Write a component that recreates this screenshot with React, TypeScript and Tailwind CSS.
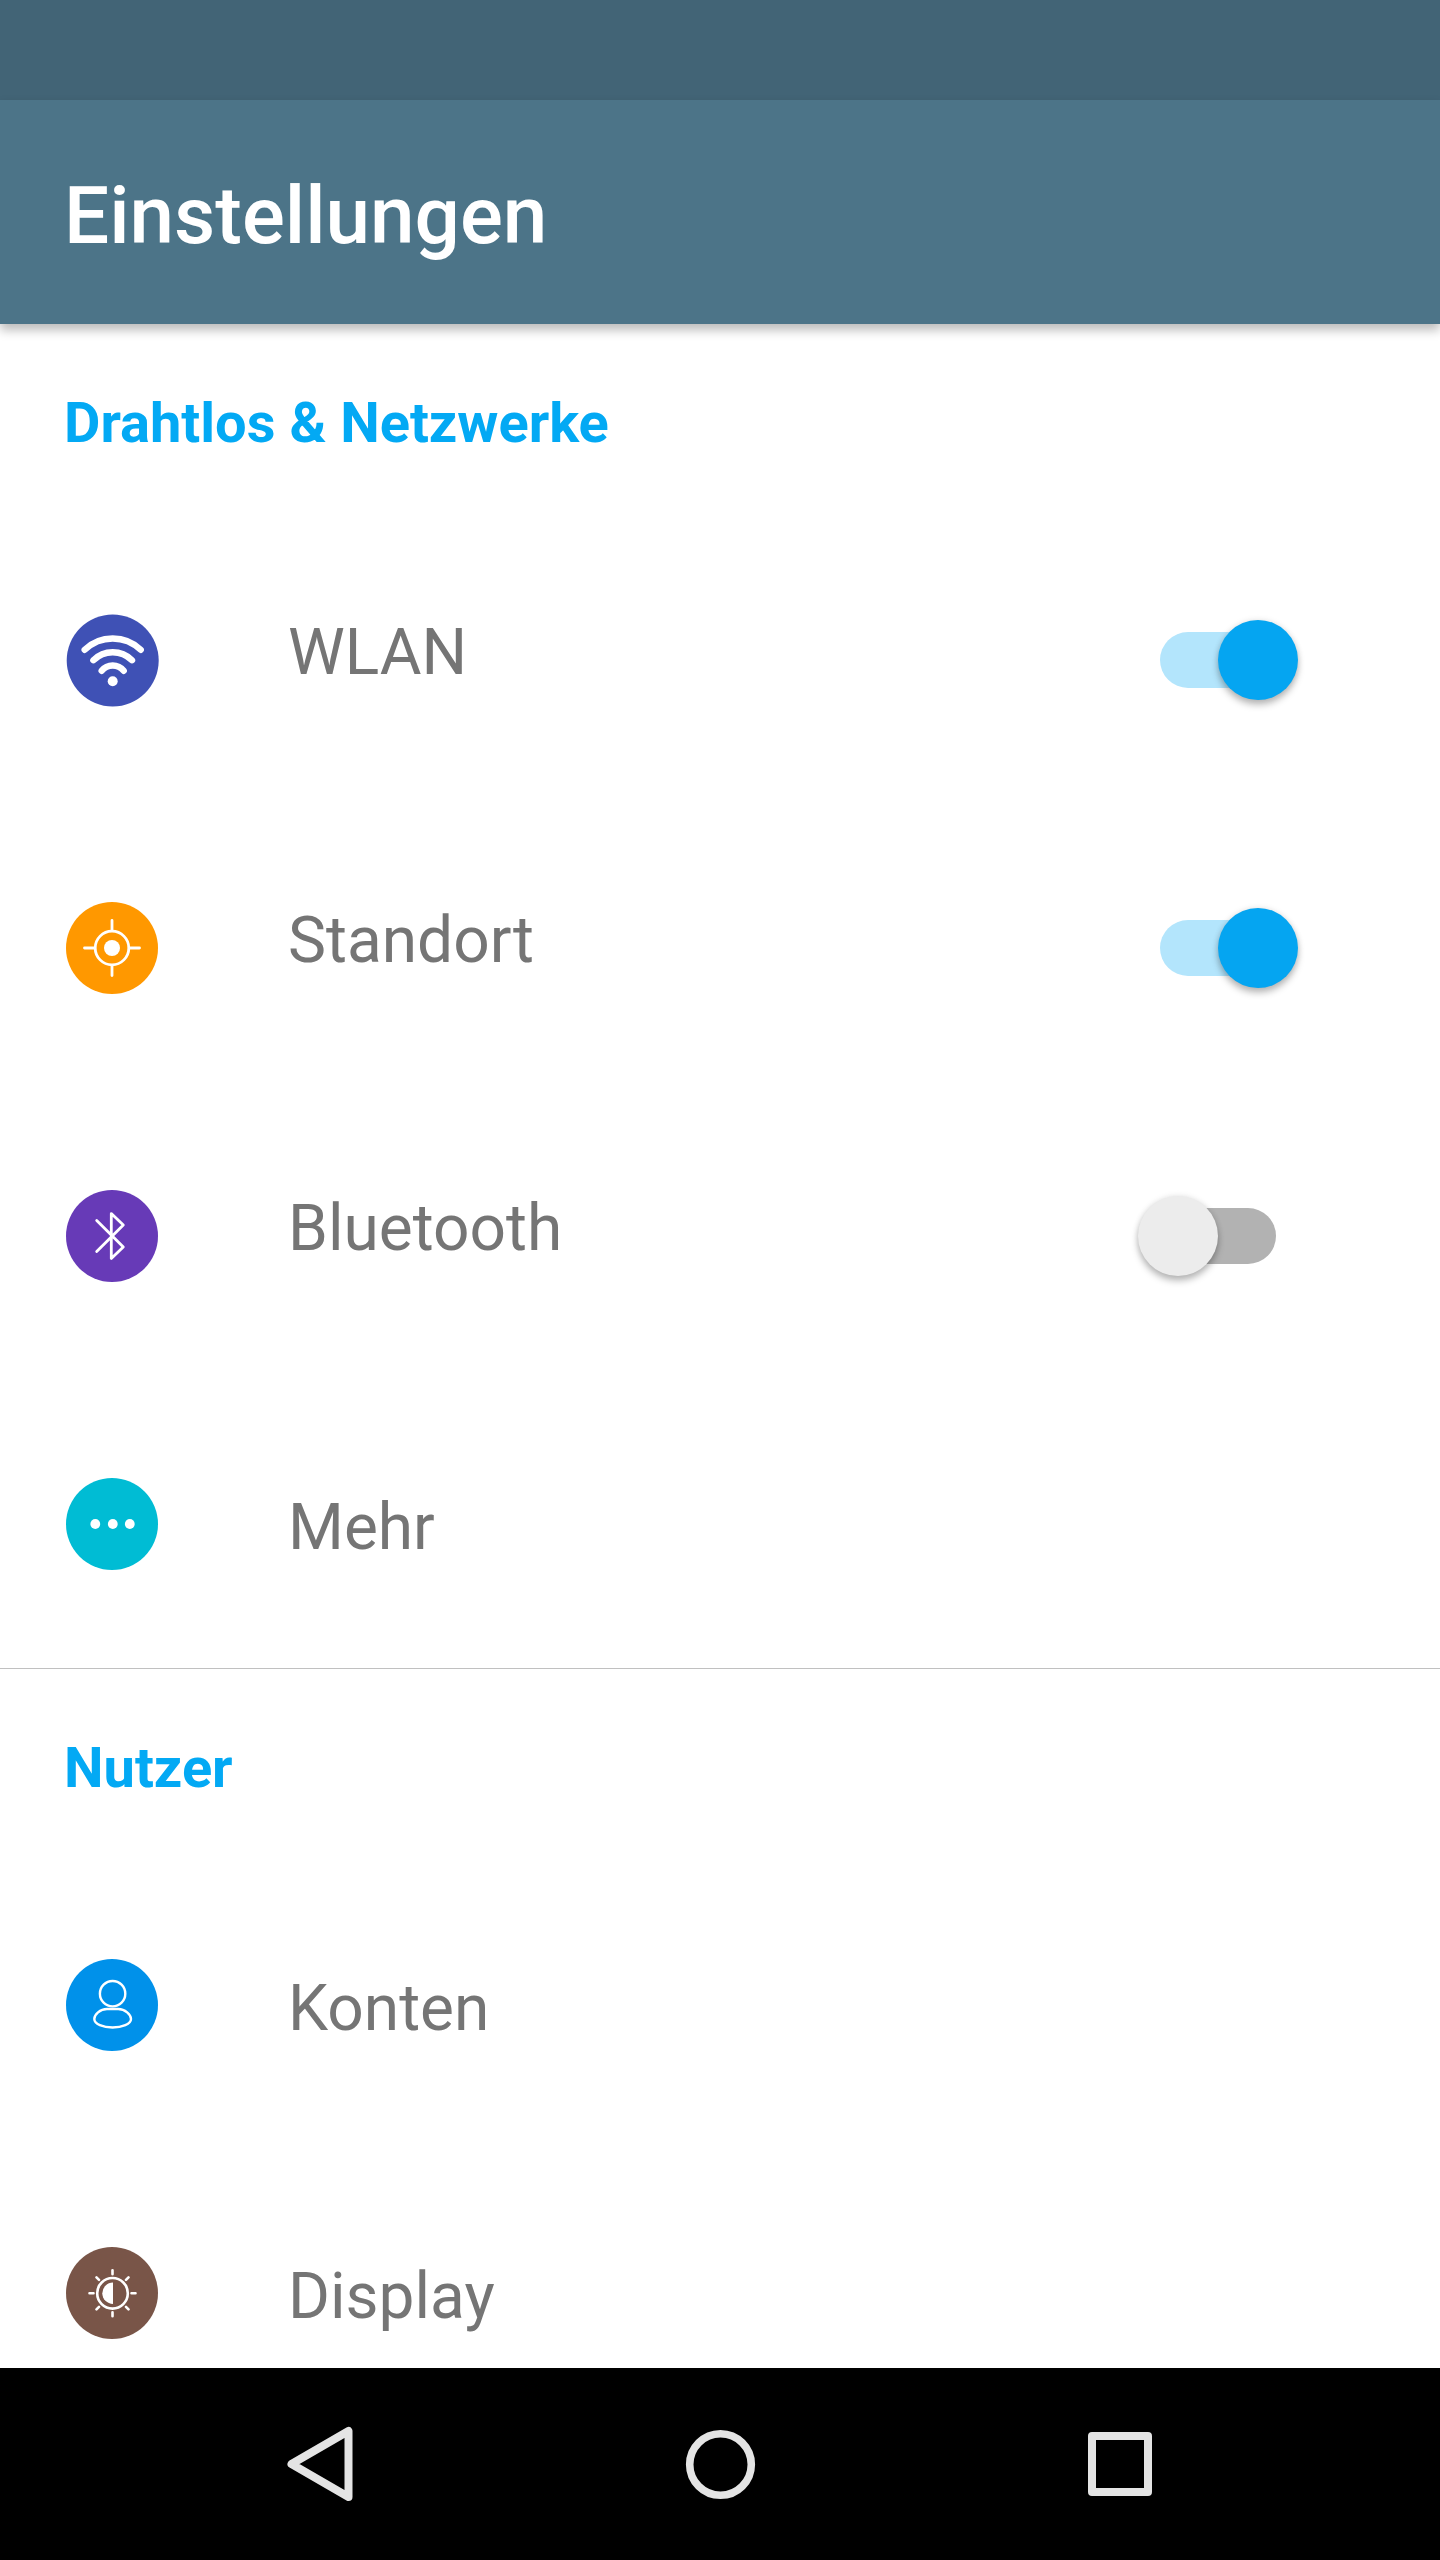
import { useState, type ReactNode } from 'react'
import clsx from 'clsx'

type SettingsItem = {
  label: string
  icon: ReactNode
  toggle?: boolean
}

type SettingsSection = {
  title: string
  items: SettingsItem[]
}

// Icons are drawn around the origin of a 96x96 box
const WifiIcon = (
  <g transform="translate(0.7 0.5)" fill="none" stroke="white" strokeWidth="6.4" strokeLinecap="round">
    <circle r="46" fill="#3f51b5" stroke="none" />
    <path d="M-28 -10.7A40.3 40.3 0 0 1 28 -10.7" />
    <path d="M-19.3 -0.3A27.3 27.3 0 0 1 19.3 -0.3" />
    <path d="M-11 10.3A14 14 0 0 1 11 10.3" />
    <circle cy="20.7" r="5" fill="white" stroke="none" />
  </g>
)

const LocationIcon = (
  <g fill="none" stroke="white" strokeWidth="2.8" strokeLinecap="round">
    <circle r="46" fill="#ff9800" stroke="none" />
    <circle r="16.8" />
    <circle r="8" fill="white" stroke="none" />
    <path d="M0 -27.5V-18M0 18V27.5M-27.5 0H-18M18 0H27.5" />
  </g>
)

const BluetoothIcon = (
  <g fill="none" stroke="white" strokeWidth="2.8" strokeLinecap="round" strokeLinejoin="round">
    <circle r="46" fill="#673ab7" stroke="none" />
    <path d="M-15.3 -15.5L11.3 11L-0.7 22.4V-22.4L11.3 -11L-15.3 15.5" />
  </g>
)

const MoreIcon = (
  <g fill="white">
    <circle r="46" fill="#00bcd4" />
    <circle cx="-16.7" r="4.9" />
    <circle cx="0.8" r="4.9" />
    <circle cx="17.8" r="4.9" />
  </g>
)

const AccountIcon = (
  <g fill="none" stroke="white" strokeWidth="2.4">
    <circle r="46" fill="#0091ea" stroke="none" />
    <circle cx="0.6" cy="-11.3" r="12.7" />
    <path d="M-5 4H6.3C13 4 19 9.5 19 14C19 19 10 22.5 0.6 22.5C-9 22.5 -17.7 19 -17.7 14C-17.7 9.5 -12 4 -5 4Z" />
  </g>
)

const DisplayIcon = (
  <g fill="none" stroke="white" strokeWidth="2.6" strokeLinecap="round">
    <circle r="46" fill="#795548" stroke="none" />
    <g transform="translate(0.5 0.3)">
      <circle r="15.3" />
      <path d="M0.5 -10.7A10.7 10.7 0 0 0 0.5 10.7Z" fill="white" stroke="none" />
      <path d="M0 -23V-19M0 19V23M-23 0H-19M19 0H23" />
      <path d="M-16 -16L-13.5 -13.5M13.5 13.5L16 16M-16 16L-13.5 13.5M13.5 -13.5L16 -16" />
    </g>
  </g>
)

const sections: SettingsSection[] = [
  {
    title: 'Drahtlos & Netzwerke',
    items: [
      { label: 'WLAN', icon: WifiIcon, toggle: true },
      { label: 'Standort', icon: LocationIcon, toggle: true },
      { label: 'Bluetooth', icon: BluetoothIcon, toggle: false },
      { label: 'Mehr', icon: MoreIcon },
    ],
  },
  {
    title: 'Nutzer',
    items: [
      { label: 'Konten', icon: AccountIcon },
      { label: 'Display', icon: DisplayIcon },
    ],
  },
]

function Toggle({ label, initial }: { label: string; initial: boolean }) {
  const [on, setOn] = useState(initial)

  return (
    <button
      type="button"
      role="switch"
      aria-checked={on}
      aria-label={label}
      onClick={() => setOn(!on)}
      className="relative flex h-20 w-40 items-center justify-center"
    >
      <span className={clsx('h-14 w-[116px] rounded-full', on ? 'bg-[#b3e5fc]' : 'bg-[#b2b2b2]')} />
      <span
        className={clsx(
          'absolute top-0 size-20 rounded-full shadow-[0_5px_7px_rgba(0,0,0,0.26),0_0_6px_rgba(0,0,0,0.1)]',
          on ? 'right-0 bg-[#05a5f1]' : 'left-0 bg-[#ececec]'
        )}
      />
    </button>
  )
}

function Row({ item }: { item: SettingsItem }) {
  const hasToggle = item.toggle !== undefined

  return (
    <li className="flex h-72 shrink-0 items-center pr-[142px] pl-16">
      <svg viewBox="-48 -48 96 96" className="size-24 shrink-0">
        {item.icon}
      </svg>
      <span
        className={clsx(
          'ml-32 flex-1 text-[64px] leading-[76px] text-[#757575]',
          hasToggle ? 'pb-3.5' : 'pt-2'
        )}
      >
        {item.label}
      </span>
      {hasToggle && <Toggle label={item.label} initial={item.toggle === true} />}
    </li>
  )
}

export default function App() {
  return (
    <div className="flex h-[2560px] w-[1440px] flex-col overflow-hidden bg-white font-[Roboto,sans-serif]">
      {/* Status bar */}
      <div className="h-[100px] shrink-0 bg-[#426476]" />

      {/* App bar */}
      <header className="z-10 flex h-56 shrink-0 items-center bg-[#4c7488] pt-2 pl-16 shadow-[0_6px_10px_rgba(0,0,0,0.27)]">
        <h1 className="text-[80px] leading-none font-medium text-white">Einstellungen</h1>
      </header>

      <main className="flex min-h-0 flex-1 flex-col overflow-hidden">
        {sections.map((section, index) => (
          <section
            key={section.title}
            className={clsx('shrink-0', index > 0 && 'border-t border-[#c0c0c0]')}
          >
            <h2 className="flex h-48 items-center pt-1.5 pl-16 text-[56px] leading-none font-bold text-[#03a9f4]">
              {section.title}
            </h2>
            <ul>
              {section.items.map((item) => (
                <Row key={item.label} item={item} />
              ))}
            </ul>
          </section>
        ))}
      </main>

      {/* Navigation bar */}
      <nav className="z-10 flex h-48 shrink-0 items-center bg-black px-[120px]">
        <button type="button" aria-label="Zurück" className="flex flex-1 justify-center">
          <svg viewBox="0 0 80 80" className="size-20" fill="none" stroke="#e4e4e4" strokeWidth="8" strokeLinejoin="round">
            <path d="M11.5 40L68.5 7V73Z" />
          </svg>
        </button>
        <button type="button" aria-label="Startseite" className="flex flex-1 justify-center">
          <svg viewBox="0 0 80 80" className="size-20" fill="none" stroke="#e4e4e4" strokeWidth="7.6">
            <circle cx="40.5" cy="40.5" r="30.8" />
          </svg>
        </button>
        <button type="button" aria-label="Übersicht" className="flex flex-1 justify-center">
          <svg viewBox="0 0 80 80" className="size-20" fill="none" stroke="#e4e4e4" strokeWidth="8" strokeLinejoin="round">
            <path d="M12 12H68V68H12Z" />
          </svg>
        </button>
      </nav>
    </div>
  )
}
